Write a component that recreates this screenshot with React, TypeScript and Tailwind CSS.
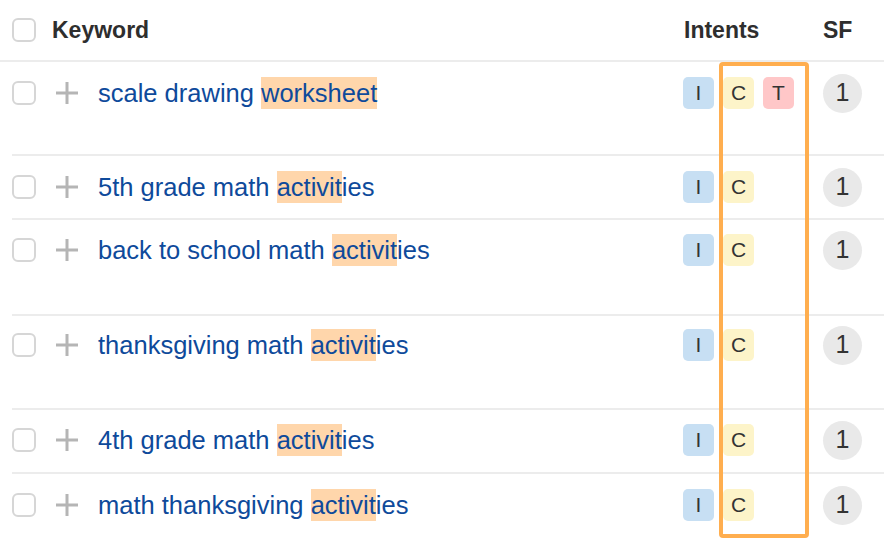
import React from "react";

type Row = { pre: string; hl: string; post: string; intents: string[]; h: string; pt: string };

const rows: Row[] = [
  { pre: "scale drawing ", hl: "worksheet", post: "", intents: ["I", "C", "T"], h: "h-[94px]", pt: "pt-[15px]" },
  { pre: "5th grade math ", hl: "activit", post: "ies", intents: ["I", "C"], h: "h-[64px]", pt: "pt-[15px]" },
  { pre: "back to school math ", hl: "activit", post: "ies", intents: ["I", "C"], h: "h-[96px]", pt: "pt-[14px]" },
  { pre: "thanksgiving math ", hl: "activit", post: "ies", intents: ["I", "C"], h: "h-[94px]", pt: "pt-[13px]" },
  { pre: "4th grade math ", hl: "activit", post: "ies", intents: ["I", "C"], h: "h-[64px]", pt: "pt-[14px]" },
  { pre: "math thanksgiving ", hl: "activit", post: "ies", intents: ["I", "C"], h: "h-[83px]", pt: "pt-[15px]" },
];

const badgeBg: Record<string, string> = {
  I: "bg-[#c7dff3]",
  C: "bg-[#fdf4c9]",
  T: "bg-[#ffc7c8]",
};

function Checkbox() {
  return <div className="w-[24px] h-[24px] rounded-[6px] border-2 border-[#d6d6d6] bg-white shrink-0" />;
}

function Plus() {
  return (
    <svg width="22" height="22" viewBox="0 0 22 22" className="shrink-0">
      <rect x="9.5" y="0" width="3" height="22" fill="#b5b5b5" />
      <rect x="0" y="9.5" width="22" height="3" fill="#b5b5b5" />
    </svg>
  );
}

export default function App() {
  return (
    <div
      className="relative w-[884px] h-[557px] bg-white overflow-hidden text-[#333]"
      style={{ fontFamily: '"Liberation Sans", Arial, sans-serif' }}
    >
      {/* header */}
      <div className="flex items-center h-[62px] border-b-2 border-[#ececec] pl-[12px]">
        <Checkbox />
        <div className="flex-1 ml-[16px] text-[23px] font-bold text-[#2e2e2e]">Keyword</div>
        <div className="w-[140px] pl-[1px] text-[23px] font-bold text-[#2e2e2e]">Intents</div>
        <div className="w-[61px] text-[23px] font-bold text-[#2e2e2e]">SF</div>
      </div>

      {rows.map((r, i) => (
        <div
          key={i}
          className={`ml-[12px] flex items-start ${r.pt} ${r.h} ${i < rows.length - 1 ? "border-b-2 border-[#ececec]" : ""}`}
        >
          <div className="h-[32px] flex items-center">
            <Checkbox />
          </div>
          <div className="h-[32px] flex items-center ml-[20px]">
            <Plus />
          </div>
          <div className="flex-1 ml-[20px] text-[25.5px] leading-[32px] text-[#0e4a9b] whitespace-nowrap">
            {r.pre}
            <span className="inline-block bg-[#ffd6ab] h-[32px]">{r.hl}</span>
            {r.post}
          </div>
          <div className="w-[140px] h-[32px] flex items-center gap-[9px]">
            {r.intents.map((b) => (
              <div
                key={b}
                className={`w-[31px] h-[32px] rounded-[5px] flex items-center justify-center text-[21px] text-[#333] ${badgeBg[b]}`}
              >
                {b}
              </div>
            ))}
          </div>
          <div className="w-[61px] h-[32px] flex items-center">
            <div className="w-[39px] h-[39px] shrink-0 rounded-full bg-[#e9e9e9] flex items-center justify-center text-[25px] text-[#333]">
              1
            </div>
          </div>
        </div>
      ))}

      {/* highlight overlay */}
      <div className="absolute left-[719px] top-[62px] w-[90px] h-[476px] border-4 border-[#ffae4f] rounded-[4px] pointer-events-none" />
    </div>
  );
}
